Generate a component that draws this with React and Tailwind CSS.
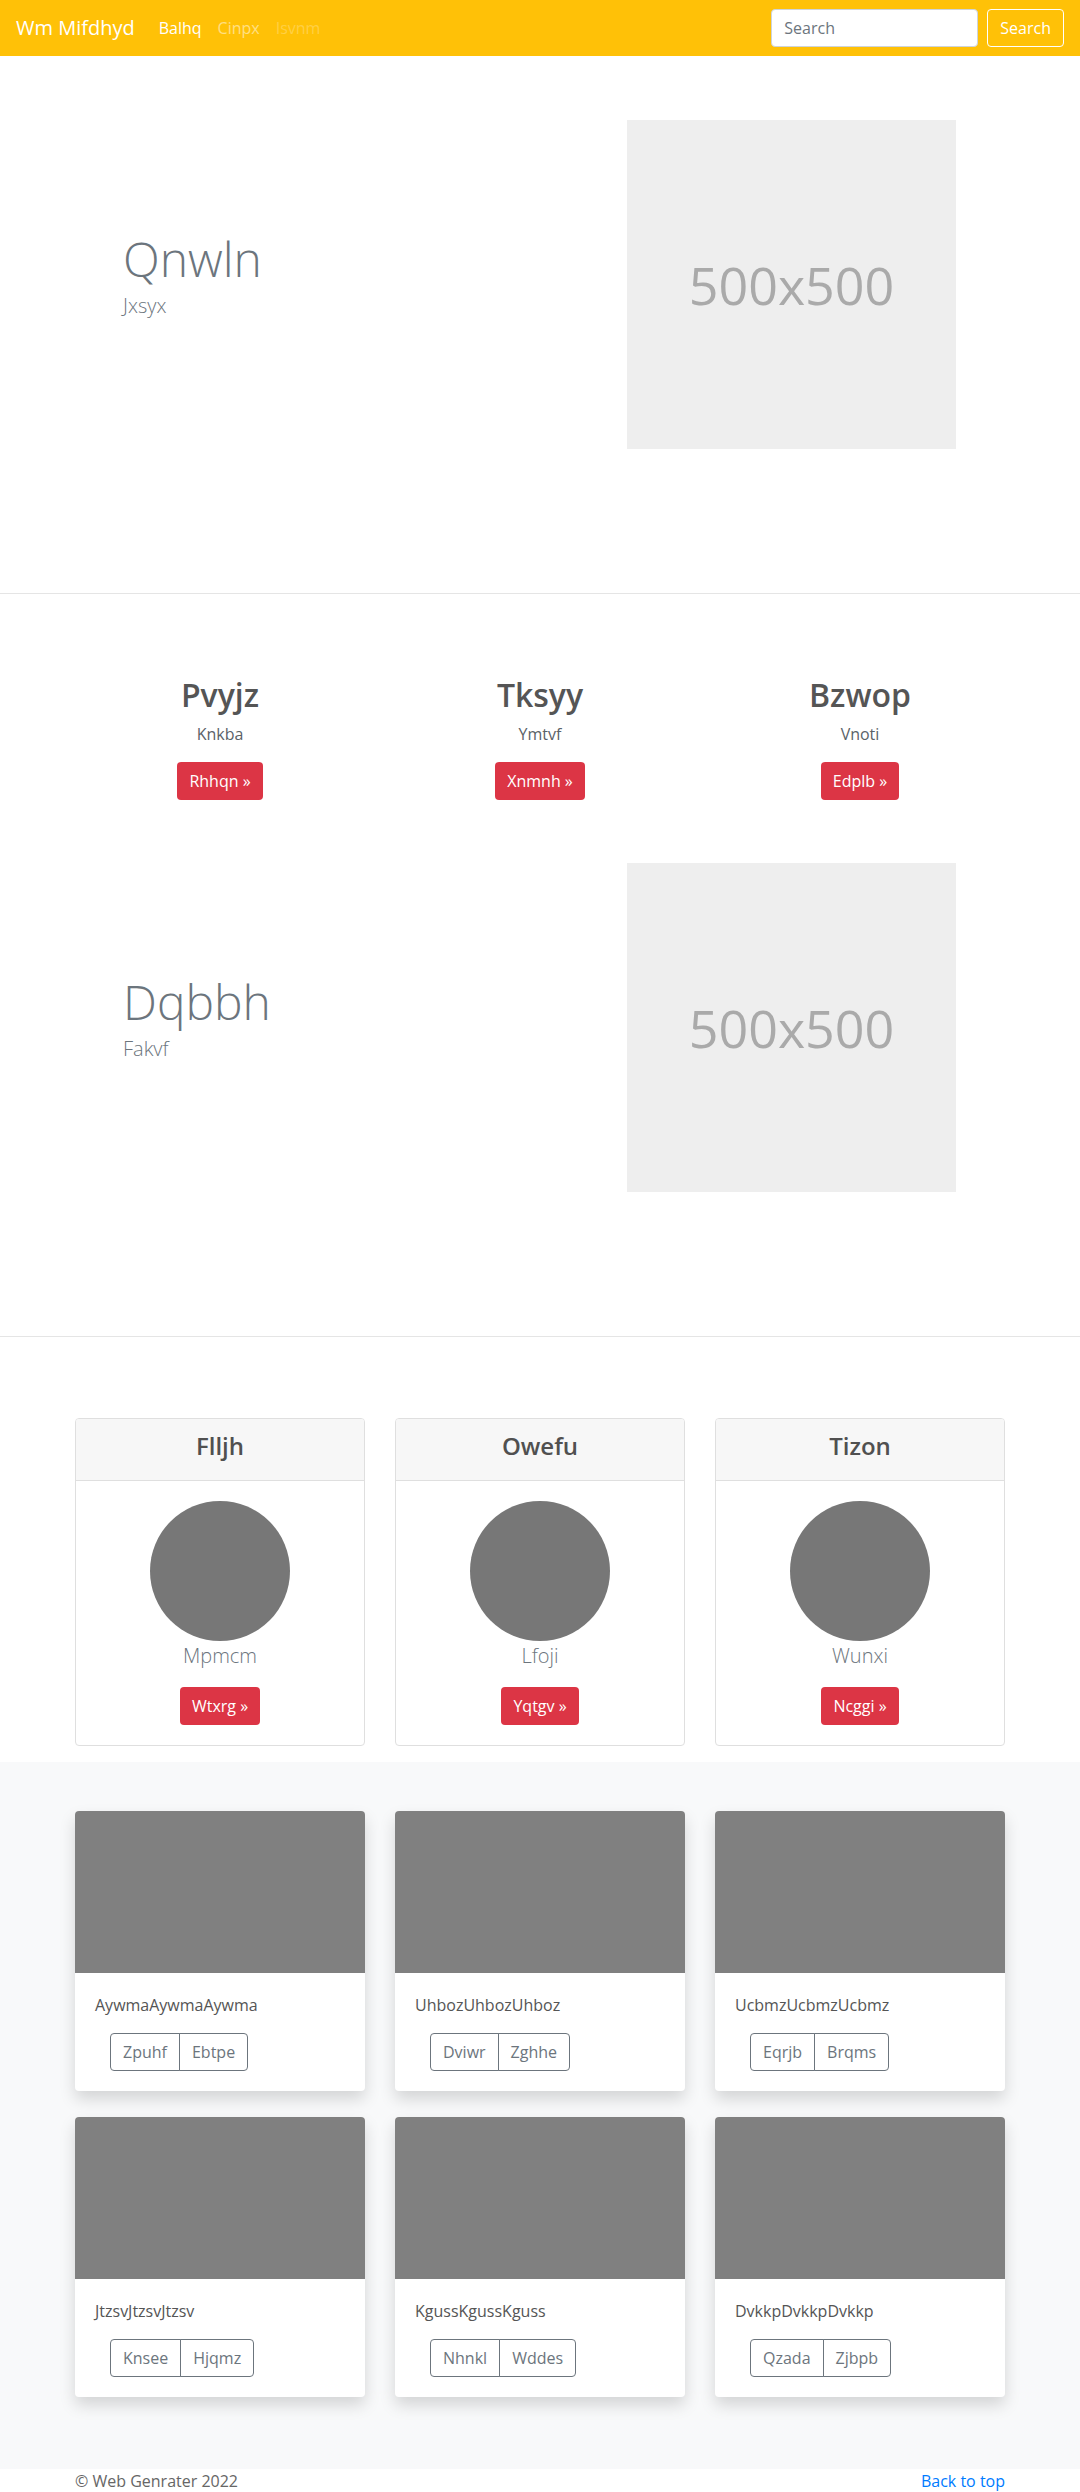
import React from 'react';

const font = { fontFamily: '"Open Sans", "Noto Sans", Arial, sans-serif' };

const features = [
  { title: 'Pvyjz', text: 'Knkba', btn: 'Rhhqn' },
  { title: 'Tksyy', text: 'Ymtvf', btn: 'Xnmnh' },
  { title: 'Bzwop', text: 'Vnoti', btn: 'Edplb' },
];

const team = [
  { title: 'Flljh', name: 'Mpmcm', btn: 'Wtxrg' },
  { title: 'Owefu', name: 'Lfoji', btn: 'Yqtgv' },
  { title: 'Tizon', name: 'Wunxi', btn: 'Ncggi' },
];

const album = [
  { text: 'AywmaAywmaAywma', a: 'Zpuhf', b: 'Ebtpe' },
  { text: 'UhbozUhbozUhboz', a: 'Dviwr', b: 'Zghhe' },
  { text: 'UcbmzUcbmzUcbmz', a: 'Eqrjb', b: 'Brqms' },
  { text: 'JtzsvJtzsvJtzsv', a: 'Knsee', b: 'Hjqmz' },
  { text: 'KgussKgussKguss', a: 'Nhnkl', b: 'Wddes' },
  { text: 'DvkkpDvkkpDvkkp', a: 'Qzada', b: 'Zjbpb' },
];

// bloc titre + image 500x500
const Hero = ({ title, lead }) => (
  <div className="mx-auto flex w-[960px] px-[15px]">
    <div className="w-1/2 pl-[48px] pt-[110px]">
      <h1 className="text-[48px] font-light leading-[58px] text-[#6c757d]">{title}</h1>
      <p className="mt-[3px] text-[20px] font-light leading-[30px] text-[#6c757d]">{lead}</p>
    </div>
    <div className="w-1/2 pl-[87px]">
      <div className="flex h-[329px] w-[329px] items-center justify-center bg-[#eeeeee] text-[52px] text-[#aaaaaa]">
        500x500
      </div>
    </div>
  </div>
);

export default function App() {
  return (
    <div className="bg-white" style={font}>
      {/* navbar */}
      <nav className="flex h-[56px] items-center bg-[#ffc107] px-4">
        <a className="mr-4 text-[20px] leading-[30px] text-white">Wm Mifdhyd</a>
        <div className="flex text-[16px]">
          <a className="px-2 text-white">Balhq</a>
          <a className="px-2 text-white/50">Cinpx</a>
          <a className="px-2 text-white/25">Isvnm</a>
        </div>
        <div className="ml-auto flex items-center gap-[9px]">
          <input
            placeholder="Search"
            className="h-[38px] w-[207px] rounded border border-[#ced4da] bg-white px-3 text-[16px] text-[#495057] placeholder:text-[#6c757d]"
          />
          <button className="h-[38px] rounded border border-white px-3 text-[16px] text-white">Search</button>
        </div>
      </nav>

      <section className="border-b border-[#e5e5e5] pb-[144px] pt-[64px]">
        <Hero title="Qnwln" lead="Jxsyx" />
      </section>

      <section className="border-b border-[#e5e5e5] pb-[144px] pt-[82px]">
        <div className="mx-auto grid w-[960px] grid-cols-3">
          {features.map((f) => (
            <div key={f.title} className="flex flex-col items-center px-[15px] text-center">
              <h2 className="mb-2 text-[32px] font-semibold leading-[38px] text-[#555555]">{f.title}</h2>
              <p className="mb-4 text-[16px] leading-[24px] text-[#5a6268]">{f.text}</p>
              <button className="h-[38px] rounded bg-[#dc3545] px-3 text-[16px] text-white">{f.btn} »</button>
            </div>
          ))}
        </div>
        <div className="pt-[63px]">
          <Hero title="Dqbbh" lead="Fakvf" />
        </div>
      </section>

      <section className="pb-[16px] pt-[81px]">
        <div className="mx-auto grid w-[960px] grid-cols-3">
          {team.map((t) => (
            <div key={t.title} className="px-[15px]">
              <div className="overflow-hidden rounded border border-[#dfdfdf] text-center">
                <div className="border-b border-[#dfdfdf] bg-[#f7f7f7] px-5 pb-3 pt-3">
                  <h4 className="mb-2 text-[24px] font-semibold leading-[29px] text-[#505050]">{t.title}</h4>
                </div>
                <div className="flex flex-col items-center p-5">
                  <div className="h-[140px] w-[140px] rounded-full bg-[#777777]" />
                  <p className="mb-4 text-[20px] font-light leading-[30px] text-[#6c757d]">{t.name}</p>
                  <button className="h-[38px] rounded bg-[#dc3545] px-3 text-[16px] text-white">{t.btn} »</button>
                </div>
              </div>
            </div>
          ))}
        </div>
      </section>

      <section className="bg-[#f8f9fa] pb-[72px] pt-[49px]">
        <div className="mx-auto grid w-[960px] grid-cols-3 gap-y-[26px]">
          {album.map((c) => (
            <div key={c.text} className="px-[15px]">
              <div className="overflow-hidden rounded bg-white shadow-[0_8px_16px_rgba(0,0,0,0.15)]">
                <div className="h-[162px] bg-[#808080]" />
                <div className="p-5">
                  <p className="mb-4 text-[16px] leading-[24px] text-[#555555]">{c.text}</p>
                  <div className="ml-[15px] inline-flex">
                    <button className="h-[38px] rounded-l border border-[#6c757d] px-3 text-[16px] text-[#6c757d]">{c.a}</button>
                    <button className="-ml-px h-[38px] rounded-r border border-[#6c757d] px-3 text-[16px] text-[#6c757d]">{c.b}</button>
                  </div>
                </div>
              </div>
            </div>
          ))}
        </div>
      </section>

      <footer className="h-[23px] overflow-hidden">
        <div className="mx-auto flex w-[960px] justify-between px-[15px] text-[16px] leading-[24px]">
          <p className="text-[#666666]">© Web Genrater 2022</p>
          <a className="text-[#007bff]">Back to top</a>
        </div>
      </footer>
    </div>
  );
}
